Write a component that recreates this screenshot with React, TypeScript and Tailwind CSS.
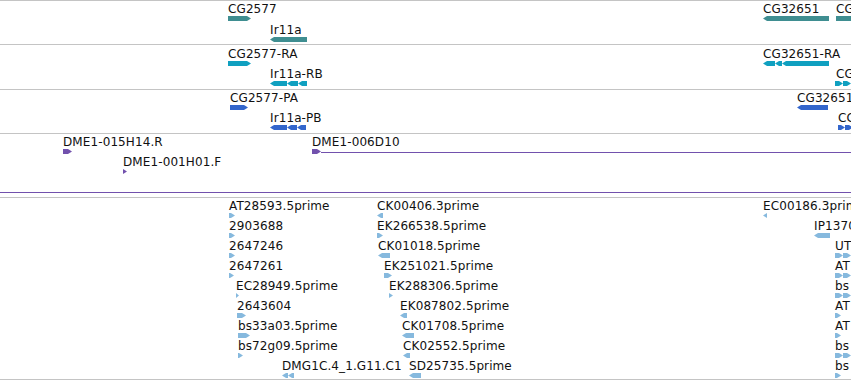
import React from "react";

type Dir = "L" | "R";
type Seg = [number, number, Dir];

type Feature = {
  label: string;
  x: number; // label left edge
  y: number; // glyph top, relative to the track
  segs: Seg[];
  tail?: number; // thin line running on to the right
};

const GENE = "#3f8e91";
const MRNA = "#10a0c0";
const PROT = "#3366cc";
const CLONE = "#7251ad";
const EST = "#86b9de";

// one exon drawn as a 5px bar with a pointed end
const arrow = (a: number, b: number, dir: Dir, y: number) => {
  const w = b - a;
  const t = Math.min(4, w);
  if (dir === "R") {
    if (w <= 4) return `${a},${y} ${b},${y + 2.5} ${a},${y + 5}`;
    return `${a},${y} ${b - t},${y} ${b},${y + 2.5} ${b - t},${y + 5} ${a},${y + 5}`;
  }
  if (w <= 4) return `${b},${y} ${a},${y + 2.5} ${b},${y + 5}`;
  return `${a},${y + 2.5} ${a + t},${y} ${b},${y} ${b},${y + 5} ${a + t},${y + 5}`;
};

const Track = ({
  features,
  color,
  className,
}: {
  features: Feature[];
  color: string;
  className: string;
}) => (
  <div className={`relative ${className}`}>
    <svg className="absolute inset-0" width={851} height="100%">
      {features.map((f, i) => (
        <g key={i} fill={color}>
          {f.segs.map((s, j) => (
            <polygon key={j} points={arrow(s[0], s[1], s[2], f.y)} />
          ))}
          {f.tail && (
            <rect x={f.segs[f.segs.length - 1][1]} y={f.y + 3} width={f.tail} height={1} />
          )}
        </g>
      ))}
    </svg>
    {features.map((f, i) => (
      <span
        key={i}
        className="absolute whitespace-nowrap text-[12px] leading-[12px] tracking-[0.1px] text-[#111]"
        style={{ left: f.x, top: f.y - 13 }}
      >
        {f.label}
      </span>
    ))}
  </div>
);

const genes: Feature[] = [
  { label: "CG2577", x: 228, y: 15, segs: [[228, 251, "R"]] },
  { label: "Ir11a", x: 270, y: 36, segs: [[270, 307, "L"]] },
  { label: "CG32651", x: 763, y: 15, segs: [[763, 829, "L"]] },
  { label: "CG", x: 836, y: 15, segs: [[836, 856, "R"]] },
];

const transcripts: Feature[] = [
  { label: "CG2577-RA", x: 228, y: 16, segs: [[228, 251, "R"]] },
  { label: "Ir11a-RB", x: 270, y: 36, segs: [[270, 287, "L"], [287, 298, "L"], [298, 307, "L"]] },
  { label: "CG32651-RA", x: 763, y: 16, segs: [[763, 775, "L"], [775, 782, "L"], [782, 829, "L"]] },
  { label: "CG", x: 836, y: 36, segs: [[835, 843, "R"], [843, 851, "R"]] },
];

const proteins: Feature[] = [
  { label: "CG2577-PA", x: 230, y: 15, segs: [[230, 248, "R"]] },
  { label: "Ir11a-PB", x: 270, y: 35, segs: [[270, 287, "L"], [287, 297, "L"], [297, 306, "L"]] },
  { label: "CG32651", x: 797, y: 15, segs: [[797, 828, "L"]] },
  { label: "CG", x: 838, y: 35, segs: [[838, 845, "R"], [845, 853, "R"]] },
];

const clones: Feature[] = [
  { label: "DME1-015H14.R", x: 63, y: 15, segs: [[63, 72, "R"]] },
  { label: "DME1-001H01.F", x: 123, y: 35, segs: [[123, 127, "R"]] },
  { label: "DME1-006D10", x: 312, y: 15, segs: [[312, 321, "R"]], tail: 540 },
];

const estRows: [string, number, Seg[]][][] = [
  [
    ["AT28593.5prime", 229, [[229, 235, "R"]]],
    ["CK00406.3prime", 377, [[377, 383, "L"]]],
    ["EC00186.3prim", 763, [[763, 767, "L"]]],
  ],
  [
    ["2903688", 229, [[229, 235, "R"]]],
    ["EK266538.5prime", 377, [[377, 383, "R"]]],
    ["IP1370", 814, [[814, 830, "L"]]],
  ],
  [
    ["2647246", 229, [[229, 235, "R"]]],
    ["CK01018.5prime", 378, [[378, 390, "L"]]],
    ["UT", 835, [[835, 843, "R"], [843, 851, "R"]]],
  ],
  [
    ["2647261", 229, [[229, 234, "R"]]],
    ["EK251021.5prime", 384, [[384, 392, "R"]]],
    ["AT", 835, [[835, 843, "R"], [843, 851, "R"]]],
  ],
  [
    ["EC28949.5prime", 236, [[236, 239, "R"]]],
    ["EK288306.5prime", 389, [[389, 393, "R"]]],
    ["bs", 835, [[835, 843, "R"], [843, 851, "R"]]],
  ],
  [
    ["2643604", 237, [[237, 246, "R"]]],
    ["EK087802.5prime", 400, [[400, 407, "L"]]],
    ["AT", 835, [[835, 841, "R"]]],
  ],
  [
    ["bs33a03.5prime", 238, [[238, 250, "R"]]],
    ["CK01708.5prime", 402, [[402, 414, "L"]]],
    ["AT", 835, [[835, 841, "R"]]],
  ],
  [
    ["bs72g09.5prime", 238, [[238, 243, "R"]]],
    ["CK02552.5prime", 403, [[403, 410, "L"]]],
    ["bs", 835, [[835, 843, "R"], [843, 851, "R"]]],
  ],
  [
    ["DMG1C.4_1.G11.C1", 282, [[282, 288, "L"], [288, 294, "L"]]],
    ["SD25735.5prime", 409, [[409, 421, "L"]]],
    ["bs", 835, [[835, 841, "R"]]],
  ],
];

const ests: Feature[] = estRows.flatMap((row, i) =>
  row.map(([label, x, segs]) => ({ label, x, y: 15 + i * 20, segs }))
);

const Rule = () => <div className="h-px bg-[#c4c4c4]" />;

export default function App() {
  return (
    <div className="w-[851px] h-[381px] overflow-hidden bg-white font-['DejaVu_Sans',sans-serif]">
      <Rule />
      <Track features={genes} color={GENE} className="h-[43px]" />
      <Rule />
      <Track features={transcripts} color={MRNA} className="h-[44px]" />
      <Rule />
      <Track features={proteins} color={PROT} className="h-[43px]" />
      <Rule />
      <Track features={clones} color={CLONE} className="h-[58px]" />
      <div className="h-px bg-[#7251ad]" />
      <div className="h-[4px]" />
      <Rule />
      <Track features={ests} color={EST} className="h-[181px]" />
      <Rule />
    </div>
  );
}
